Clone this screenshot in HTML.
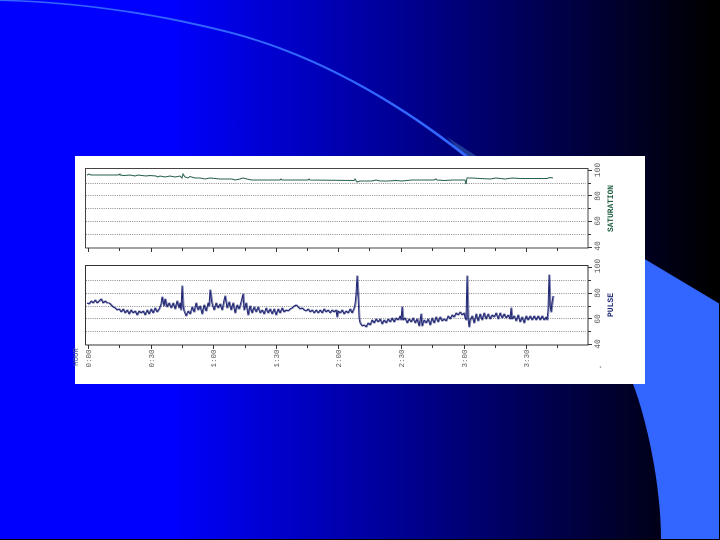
<!DOCTYPE html>
<html>
<head>
<meta charset="utf-8">
<style>
html,body{margin:0;padding:0;width:720px;height:540px;overflow:hidden;background:#000}
#bg{position:absolute;left:0;top:0;width:720px;height:540px;background:linear-gradient(90deg,#0000ff 0,#0000ff 170px,#000000 712px)}
svg{position:absolute;left:0;top:0}
text{font-family:"Liberation Mono",monospace}
</style>
</head>
<body>
<div id="bg"></div>
<svg width="720" height="540" viewBox="0 0 720 540">
  <path d="M447,137 L478,157 L465,157 Z" fill="#1c3a96"/>
  <path d="M0,-0.500 C80,1.500 160,13.300 233,32.300 C320,55.300 400,102.500 467,155 L469,157 L465,157 C400,105.500 320,57.500 233,34.300 C160,15.300 80,2.800 0,1 Z" fill="#3366ff"/>
  <path d="M472,156 L720,304 L720,540 L661,540 C661,480 645,415 633,384 L560,240 Z" fill="#3366ff"/>
  <rect x="719" y="0" width="1" height="540" fill="#000"/>
  <rect x="0" y="539" width="720" height="1" fill="#000"/>

  <g style="filter:blur(0.3px)">
  <rect x="75" y="156" width="570" height="228" fill="#ffffff"/>

  <g stroke="#8c8c8c" stroke-width="1" stroke-dasharray="1 1.2" fill="none">
    <path d="M86,183.500H586M86,195.500H586M86,208.500H586M86,221.500H586M86,234.500H586"/>
    <path d="M86,280.500H586M86,293.500H586M86,306.500H586M86,318.500H586M86,331.500H586"/>
  </g>
  <g fill="none" stroke="#333" stroke-width="1">
    <path d="M85.500,248V168.500H588V248H85.500" stroke="#444"/>
    <path d="M85.500,345V265.500H588V345H85.500" stroke="#333"/>
    <path d="M88.500,248v4M119.500,248v3M151.500,248v4M182.500,248v3M213.500,248v4M245.500,248v3M276.500,248v4M307.500,248v3M338.500,248v4M369.500,248v3M401.500,248v4M432.500,248v3M464.500,248v4M495.500,248v3M526.500,248v4M557.500,248v3"/>
    <path d="M88.500,345v4M119.500,345v3M151.500,345v4M182.500,345v3M213.500,345v4M245.500,345v3M276.500,345v4M307.500,345v3M338.500,345v4M369.500,345v3M401.500,345v4M432.500,345v3M464.500,345v4M495.500,345v3M526.500,345v4M557.500,345v3"/>
    <path d="M588,170.500h4M588,183.500h3M588,195.500h4M588,208.500h3M588,221.500h4M588,234.500h3M588,247.500h4"/>
    <path d="M588,267.500h4M588,280.500h3M588,293.500h4M588,306.500h3M588,318.500h4M588,331.500h3M588,344.500h4"/>
  </g>

  <path d="M87,175 L89,174 L91,175 L118,175 L120,174 L120,175 L124,175.500 L130,175 L135,176 L138,175 L146,176 L150,175.500 L156,176 L158,177 L160,176 L165,177 L170,176 L175,177 L180,176 L182,178 L183,174 L185,177 L188,178 L190,176.500 L195,178 L200,178 L205,179 L210,178 L220,179 L232,179 L235,180 L240,179 L243,178 L247,179 L252,180 L280,180 L281,179 L282,180 L308,180 L309,179 L310,180 L354,180.500 L355,179 L357,182 L360,181 L366,181 L372,181 L376,180 L380,181 L388,181 L396,180.500 L402,181 L412,180 L420,180 L434,180 L436,179 L437,180 L445,180.500 L452,180 L462,180 L465,180 L466,184 L467,178 L472,178 L480,178.500 L490,179 L496,178 L505,179 L512,178 L520,178.500 L530,178.500 L540,178.500 L547,178.500 L550,177.500 L553,178" fill="none" stroke="#24604a" stroke-width="1"/>

  <g fill="none" stroke="#1e2472" stroke-width="1" stroke-linejoin="round">
    <path id="p" d="M87,303 L89,304 L91,301 L93,303 L95,300 L97,303 L99,301 L101,299 L103,303 L105,301 L107,303 L109,303 L111,305 L113,307 L115,308 L117,310 L119,309 L121,312 L123,309 L125,313 L127,310 L129,314 L131,310 L133,313 L135,311 L137,315 L139,311 L141,313 L143,311 L145,315 L147,310 L149,314 L151,309 L153,313 L155,308 L157,312 L159,309 L161,304 L162,297 L164,306 L165,299 L167,307 L169,303 L171,308 L173,303 L175,309 L177,301 L179,308 L180,303 L181,310 L182,286 L183,306 L184,311 L186,316 L188,311 L190,314 L192,307 L194,312 L196,303 L198,310 L200,306 L202,314 L204,305 L206,311 L208,303 L209,306 L210,290 L212,304 L214,310 L216,303 L218,308 L220,304 L222,310 L224,300 L225,296 L227,308 L229,302 L231,310 L233,303 L235,313 L237,305 L239,309 L241,302 L243,294 L244,310 L246,303 L248,315 L250,306 L252,313 L254,307 L256,312 L258,307 L260,313 L262,310 L264,314 L266,308 L268,313 L270,309 L272,314 L274,309 L276,315 L278,309 L280,313 L282,308 L284,312 L286,310 L288,311 L290,309 L292,308 L294,306 L296,305 L298,307 L300,309 L302,308 L304,310 L306,311 L308,309 L310,312 L312,310 L314,313 L316,310 L318,313 L320,310 L322,313 L324,309 L326,312 L328,310 L330,313 L332,310 L334,312 L336,310 L337,317 L338,311 L340,313 L342,310 L344,314 L346,311 L348,313 L350,309 L352,313 L354,308 L355,304 L356,294 L357,276 L358,295 L359,318 L360,323 L362,326 L364,325 L366,327 L368,323 L370,325 L372,320 L374,323 L376,319 L378,322 L380,319 L382,324 L384,320 L386,323 L388,319 L390,322 L392,318 L394,322 L396,318 L398,320 L400,316 L401,320 L402,307 L403,320 L405,318 L407,323 L409,319 L411,322 L413,318 L415,323 L417,319 L419,326 L421,314 L422,326 L424,320 L426,323 L428,319 L430,325 L432,318 L434,323 L436,317 L438,322 L440,317 L442,321 L444,319 L446,321 L448,316 L450,319 L452,315 L454,317 L456,313 L458,315 L460,312 L462,315 L464,313 L465,318 L466,320 L467,276 L468,318 L469,327 L470,320 L472,316 L474,323 L476,314 L478,321 L480,314 L482,320 L484,313 L486,319 L488,314 L490,319 L492,315 L494,317 L496,313 L498,319 L500,313 L502,318 L504,314 L506,318 L508,315 L510,319 L511,308 L512,319 L514,316 L516,321 L518,315 L520,322 L522,317 L524,323 L526,316 L528,320 L530,316 L532,320 L534,316 L536,320 L538,316 L540,320 L542,316 L544,320 L546,317 L547,320 L548,310 L549,275 L550,305 L551,312 L552,303 L553,296"/>
    <use href="#p" transform="translate(1,0)" opacity="0.6"/>
  </g>

  <g font-size="8" fill="#555" text-anchor="middle">
    <text transform="translate(600,170) rotate(-90)">100</text>
    <text transform="translate(600,196) rotate(-90)">80</text>
    <text transform="translate(600,221) rotate(-90)">60</text>
    <text transform="translate(600,246) rotate(-90)">40</text>
    <text transform="translate(600,266) rotate(-90)">100</text>
    <text transform="translate(600,293) rotate(-90)">80</text>
    <text transform="translate(600,319) rotate(-90)">60</text>
    <text transform="translate(600,344) rotate(-90)">40</text>
  </g>
  <text transform="translate(613,208.500) rotate(-90)" font-size="8" font-weight="bold" fill="#1f5f42" text-anchor="middle" textLength="47" lengthAdjust="spacingAndGlyphs">SATURATION</text>
  <text transform="translate(613,305) rotate(-90)" font-size="8" font-weight="bold" fill="#222c78" text-anchor="middle" textLength="24" lengthAdjust="spacingAndGlyphs">PULSE</text>

  <g font-size="7.500" fill="#555" text-anchor="middle">
    <text transform="translate(91,358.500) rotate(-90)">0:00</text>
    <text transform="translate(154,358.500) rotate(-90)">0:30</text>
    <text transform="translate(216,358.500) rotate(-90)">1:00</text>
    <text transform="translate(279,358.500) rotate(-90)">1:30</text>
    <text transform="translate(341,358.500) rotate(-90)">2:00</text>
    <text transform="translate(404,358.500) rotate(-90)">2:30</text>
    <text transform="translate(467,358.500) rotate(-90)">3:00</text>
    <text transform="translate(529,358.500) rotate(-90)">3:30</text>
  </g>
  <text transform="translate(78,357) rotate(-90)" font-size="7.500" fill="#4a5a90" text-anchor="middle">HOUR</text>
  <circle cx="600.500" cy="367" r="0.800" fill="#888"/>
  </g>
</svg>
</body>
</html>
